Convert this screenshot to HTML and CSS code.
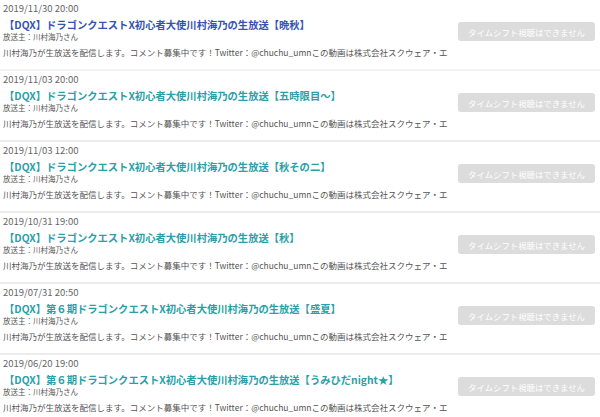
FILE: index.html
```html
<!DOCTYPE html>
<html lang="ja">
<head>
    <meta charset="UTF-8">
    <meta name="viewport" content="width=device-width, initial-scale=1.0">
    <title>タイムシフト一覧</title>
    <link rel="stylesheet" href="styles.css">
</head>
<body>
    <ul class="program-list">
        <li class="program">
            <div class="program-info">
                <div class="program-date">2019/11/30 20:00</div>
                <a class="program-title visited" href="#">【DQX】ドラゴンクエストX初心者大使川村海乃の生放送【晩秋】</a>
                <div class="program-owner">放送主：川村海乃さん</div>
                <div class="program-desc">川村海乃が生放送を配信します。コメント募集中です！Twitter：@chuchu_umnこの動画は株式会社スクウェア・エ</div>
            </div>
            <button class="ts-button" disabled>タイムシフト視聴はできません</button>
        </li>
        <li class="program">
            <div class="program-info">
                <div class="program-date">2019/11/03 20:00</div>
                <a class="program-title" href="#">【DQX】ドラゴンクエストX初心者大使川村海乃の生放送【五時限目～】</a>
                <div class="program-owner">放送主：川村海乃さん</div>
                <div class="program-desc">川村海乃が生放送を配信します。コメント募集中です！Twitter：@chuchu_umnこの動画は株式会社スクウェア・エ</div>
            </div>
            <button class="ts-button" disabled>タイムシフト視聴はできません</button>
        </li>
        <li class="program">
            <div class="program-info">
                <div class="program-date">2019/11/03 12:00</div>
                <a class="program-title" href="#">【DQX】ドラゴンクエストX初心者大使川村海乃の生放送【秋その二】</a>
                <div class="program-owner">放送主：川村海乃さん</div>
                <div class="program-desc">川村海乃が生放送を配信します。コメント募集中です！Twitter：@chuchu_umnこの動画は株式会社スクウェア・エ</div>
            </div>
            <button class="ts-button" disabled>タイムシフト視聴はできません</button>
        </li>
        <li class="program">
            <div class="program-info">
                <div class="program-date">2019/10/31 19:00</div>
                <a class="program-title" href="#">【DQX】ドラゴンクエストX初心者大使川村海乃の生放送【秋】</a>
                <div class="program-owner">放送主：川村海乃さん</div>
                <div class="program-desc">川村海乃が生放送を配信します。コメント募集中です！Twitter：@chuchu_umnこの動画は株式会社スクウェア・エ</div>
            </div>
            <button class="ts-button" disabled>タイムシフト視聴はできません</button>
        </li>
        <li class="program">
            <div class="program-info">
                <div class="program-date">2019/07/31 20:50</div>
                <a class="program-title" href="#">【DQX】第６期ドラゴンクエストX初心者大使川村海乃の生放送【盛夏】</a>
                <div class="program-owner">放送主：川村海乃さん</div>
                <div class="program-desc">川村海乃が生放送を配信します。コメント募集中です！Twitter：@chuchu_umnこの動画は株式会社スクウェア・エ</div>
            </div>
            <button class="ts-button" disabled>タイムシフト視聴はできません</button>
        </li>
        <li class="program">
            <div class="program-info">
                <div class="program-date">2019/06/20 19:00</div>
                <a class="program-title" href="#">【DQX】第６期ドラゴンクエストX初心者大使川村海乃の生放送【うみひだnight★】</a>
                <div class="program-owner">放送主：川村海乃さん</div>
                <div class="program-desc">川村海乃が生放送を配信します。コメント募集中です！Twitter：@chuchu_umnこの動画は株式会社スクウェア・エ</div>
            </div>
            <button class="ts-button" disabled>タイムシフト視聴はできません</button>
        </li>
    </ul>
</body>
</html>
```

FILE: styles.css
```css
body {
    margin: 0;
    background-color: #fff;
    font-family: "Noto Sans CJK JP", "Noto Sans", sans-serif;
    color: #555;
}
.program-list {
    list-style: none;
    margin: 0;
    padding: 0;
}
.program {
    display: flex;
    justify-content: space-between;
    align-items: flex-start;
    height: 69px;
    padding: 0 5px 0 3px;
    border-bottom: 2px solid #ececec;
}
.program:first-child {
    border-bottom-color: #f3f3f3;
}
.program-info {
    display: flex;
    flex-direction: column;
    align-items: flex-start;
    white-space: nowrap;
}
.program-date {
    margin-top: 3px;
    font-size: 9.5px;
    line-height: 11px;
    color: #666;
}
.program-title {
    margin-top: 4px;
    margin-left: 1px;
    font-size: 10.3px;
    line-height: 14px;
    font-weight: bold;
    color: #2a9fa8;
    text-decoration: none;
}
.program-title.visited {
    color: #3452b4;
}
.program-owner {
    font-size: 7.5px;
    line-height: 10px;
}
.program-desc {
    margin-top: 4px;
    font-size: 8.5px;
    line-height: 12px;
}
.ts-button {
    margin-top: 22px;
    width: 137px;
    height: 19px;
    padding: 0;
    border: none;
    border-radius: 3px;
    background-color: #dcdcdc;
    color: #fff;
    font-family: inherit;
    font-size: 8.4px;
}
```
